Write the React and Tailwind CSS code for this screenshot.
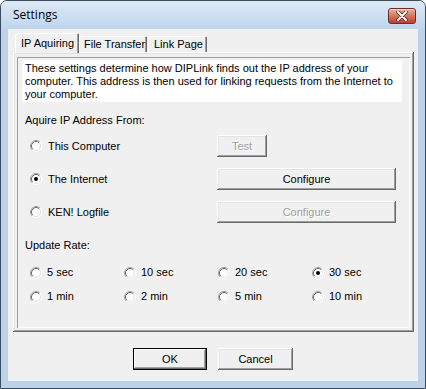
import React from 'react';

const body = { fontFamily: '"Liberation Sans", Arial, sans-serif' };

const Radio = ({ checked }) => (
  <svg width="12" height="12" viewBox="0 0 12 12" className="shrink-0">
    <circle cx="6" cy="6" r="4.5" fill="#fff" />
    <path d="M2.11 9.89 A5.5 5.5 0 0 1 9.89 2.11" stroke="#a0a0a0" strokeWidth="1" fill="none" />
    <path d="M9.89 2.11 A5.5 5.5 0 0 1 2.11 9.89" stroke="#ffffff" strokeWidth="1" fill="none" />
    <path d="M2.82 9.18 A4.5 4.5 0 0 1 9.18 2.82" stroke="#696969" strokeWidth="1" fill="none" />
    <path d="M9.18 2.82 A4.5 4.5 0 0 1 2.82 9.18" stroke="#e3e3e3" strokeWidth="1" fill="none" />
    {checked && <circle cx="6" cy="6" r="2" fill="#000" />}
  </svg>
);

const Button = ({ children, width, disabled, primary }) => (
  <div
    className={`flex h-[22px] items-center justify-center bg-[#f0f0f0] text-[11px] leading-[13px] ${width} ${
      primary
        ? 'border border-black shadow-[inset_-1px_-1px_#696969,inset_1px_1px_#fff,inset_-2px_-2px_#a0a0a0]'
        : 'shadow-[inset_-1px_-1px_#696969,inset_1px_1px_#fff,inset_-2px_-2px_#a0a0a0,inset_2px_2px_#e3e3e3]'
    } ${disabled ? 'text-[#a0a0a0] [text-shadow:1px_1px_0_#fff]' : 'text-black'}`}
  >
    {children}
  </div>
);

const rates = ['5 sec', '10 sec', '20 sec', '30 sec', '1 min', '2 min', '5 min', '10 min'];

export default function App() {
  return (
    <div className="flex h-[389px] w-[426px] flex-col rounded-t-[7px] border border-[#3b4c60] bg-[#bcd3ea]" style={body}>
      <div className="flex h-[28px] items-center justify-between rounded-t-[6px] bg-linear-to-b from-[#dde9f6] to-[#bfd5ec] pl-[12px] pr-[9px]">
        <span className="text-[12px] text-black" style={{ fontFamily: '"Open Sans", "Noto Sans", sans-serif' }}>
          Settings
        </span>
        <div className="mt-[1px] flex h-[16px] w-[28px] items-center justify-center rounded-[3px] border border-[#6d2b22] bg-linear-to-b from-[#eab0a3] via-[#d8745f] to-[#bd3f2c] shadow-[inset_0_1px_#f6d3cb]">
          <svg width="12" height="10" viewBox="0 0 12 10">
            <path d="M2 1 L10 9 M10 1 L2 9" stroke="#5a1e16" strokeWidth="3.4" strokeLinecap="round" />
            <path d="M2 1 L10 9 M10 1 L2 9" stroke="#fff" strokeWidth="2" strokeLinecap="round" />
          </svg>
        </div>
      </div>

      <div className="px-[7px] pb-[7px]">
        <div className="flex h-[352px] flex-col bg-[#f0f0f0] pl-[5px] pr-[4px] pt-[4px]">
          <div className="relative z-10 -mb-[1px] ml-[2px] flex h-[20px] items-end text-[11px] leading-[13px] text-black">
            <div className="flex h-[20px] w-[64px] items-start rounded-t-[2px] bg-[#f0f0f0] pl-[6px] pt-[4px] shadow-[inset_1px_1px_#fff,inset_-1px_0_#696969,inset_-2px_0_#a0a0a0]">
              IP Aquiring
            </div>
            <div className="mb-[1px] flex h-[16px] w-[68px] items-start rounded-t-[2px] pl-[5px] pt-[2px] shadow-[inset_1px_1px_#fff,inset_-1px_0_#696969,inset_-2px_0_#a0a0a0]">
              File Transfer
            </div>
            <div className="mb-[1px] ml-[1px] flex h-[16px] w-[59px] items-start rounded-t-[2px] pl-[6px] pt-[2px] shadow-[inset_1px_1px_#fff,inset_-1px_0_#696969,inset_-2px_0_#a0a0a0]">
              Link Page
            </div>
          </div>

          <div className="h-[280px] w-[401px] px-[4px] pb-[4px] pt-[5px] shadow-[inset_-1px_-1px_#696969,inset_1px_1px_#fff,inset_-2px_-2px_#a0a0a0,inset_2px_2px_#e3e3e3]">
            <div className="flex h-full flex-col pl-[1px] pt-[1px] text-[11px] leading-[13px] text-black shadow-[inset_1px_1px_#a0a0a0,inset_-1px_-1px_#fff]">
              <div className="ml-[4px] mt-[2px] h-[42px] w-[380px] bg-white pl-[3px] pt-[2px]">
                <p>These settings determine how DIPLink finds out the IP address of your</p>
                <p>computer. This address is then used for linking requests from the Internet to</p>
                <p>your computer.</p>
              </div>

              <p className="ml-[7px] mt-[12px]">Aquire IP Address From:</p>

              <div className="mt-[8px] flex flex-col gap-[11px]">
                {[
                  { label: 'This Computer', btn: 'Test', w: 'w-[50px]', disabled: true },
                  { label: 'The Internet', btn: 'Configure', w: 'w-[179px]', checked: true },
                  { label: 'KEN! Logfile', btn: 'Configure', w: 'w-[179px]', disabled: true },
                ].map((row) => (
                  <div key={row.label} className="flex h-[22px] items-center">
                    <div className="flex w-[199px] items-center gap-[6px] pl-[12px]">
                      <Radio checked={row.checked} />
                      <span>{row.label}</span>
                    </div>
                    <Button width={row.w} disabled={row.disabled}>
                      {row.btn}
                    </Button>
                  </div>
                ))}
              </div>

              <p className="ml-[7px] mt-[16px]">Update Rate:</p>

              <div className="ml-[12px] mt-[14px] grid grid-cols-[94px_94px_94px_94px] gap-y-[11px]">
                {rates.map((r) => (
                  <div key={r} className="flex h-[13px] items-center gap-[5px]">
                    <Radio checked={r === '30 sec'} />
                    <span>{r}</span>
                  </div>
                ))}
              </div>
            </div>
          </div>

          <div className="mt-[16px] flex justify-center gap-[11px] pr-[1px]">
            <Button width="w-[74px]" primary>
              OK
            </Button>
            <Button width="w-[75px]">Cancel</Button>
          </div>
        </div>
      </div>
    </div>
  );
}
